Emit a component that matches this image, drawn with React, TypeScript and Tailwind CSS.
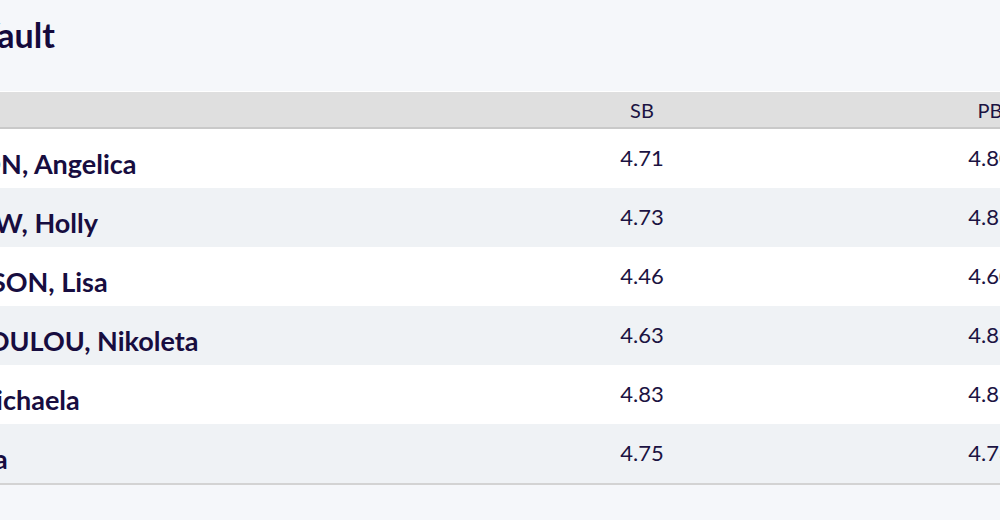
import React from 'react';

type Row = { name: string; sb: string; pb: string };

const rows: Row[] = [
  { name: 'PATTERSON, Angelica', sb: '4.71', pb: '4.80' },
  { name: 'BRADSHAW, Holly', sb: '4.73', pb: '4.81' },
  { name: 'HUTCHINSON, Lisa', sb: '4.46', pb: '4.60' },
  { name: 'STAVROPOULOU, Nikoleta', sb: '4.63', pb: '4.83' },
  { name: 'GRANT, Michaela', sb: '4.83', pb: '4.83' },
  { name: 'BAYES, Mia', sb: '4.75', pb: '4.73' },
];

export default function App() {
  return (
    <div className="h-[520px] w-full overflow-hidden bg-[#f5f7fa] text-[#1b1342]" style={{ fontFamily: 'Lato, "Noto Sans", sans-serif' }}>
      <div className="ml-[-133px] w-[1400px]">
        {/* Title */}
        <div className="pt-[15px] pb-[36px]">
          <h1 className="ml-[30px] text-[34px] leading-[40px] font-bold text-[#140a3c]">Data Vault</h1>
        </div>

        {/* Table */}
        <div className="border-t border-white bg-white">
          <div className="grid grid-cols-[601px_348px_348px_103px] h-[37px] bg-[#dfdfdf] border-b-2 border-[#c9c9c9]">
            <div className="pt-[7px] text-[20px] leading-[22px]">Name</div>
            <div className="pt-[7px] text-center text-[20px] leading-[22px]">SB</div>
            <div className="pt-[7px] text-center text-[20px] leading-[22px]">PB</div>
            <div className="pt-[7px] text-center text-[20px] leading-[22px]">SD</div>
          </div>
          {rows.map((r, i) => (
            <div
              key={r.name}
              className={`grid grid-cols-[601px_348px_348px_103px] ${i % 2 === 1 ? 'bg-[#eff2f5]' : 'bg-white'} ${i === rows.length - 1 ? 'h-[61px] border-b-2 border-[#d3d3d3]' : 'h-[59px]'}`}
            >
              <div className="pt-[20px] text-[27px] leading-[30px] font-bold whitespace-nowrap text-[#170d40]">{r.name}</div>
              <div className="pt-[17px] text-center text-[22px] leading-[24px]">{r.sb}</div>
              <div className="pt-[17px] text-center text-[22px] leading-[24px]">{r.pb}</div>
              <div></div>
            </div>
          ))}
        </div>
      </div>
    </div>
  );
}
